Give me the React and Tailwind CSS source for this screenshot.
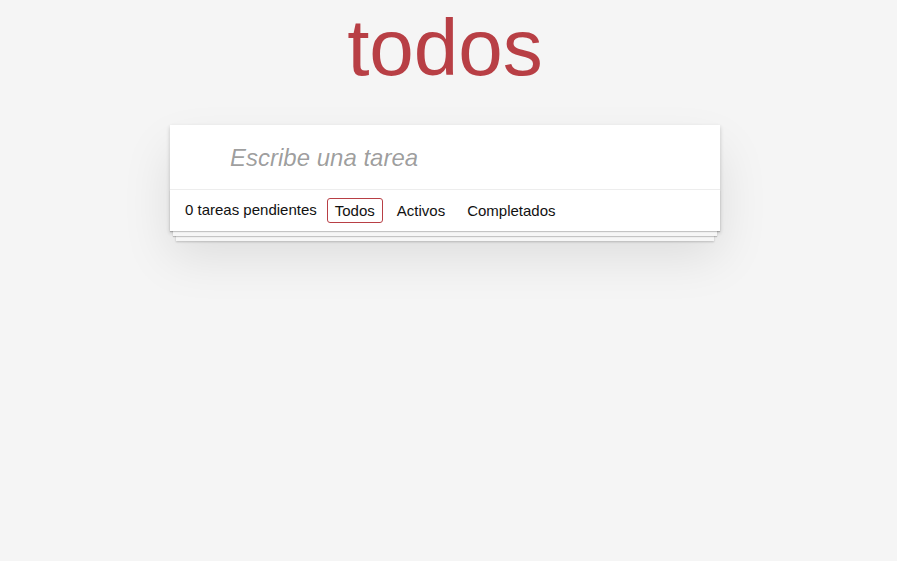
import { useState } from "react";

const FILTERS = ["Todos", "Activos", "Completados"];

export default function App() {
  const [filter, setFilter] = useState("Todos");
  const [text, setText] = useState("");

  return (
    <div className="min-h-screen bg-[#f5f5f5] font-['Liberation_Sans',Arial,sans-serif] text-[#111111]">
      <div className="w-[890px]">
        <div className="mx-auto w-[550px] pt-[2px]">
          <h1 className="text-center text-[80px] leading-[92px] font-normal text-[#b83f45]">todos</h1>

          <section className="mt-[31px] bg-white shadow-[0_2px_4px_0_rgba(0,0,0,0.2),0_25px_50px_0_rgba(0,0,0,0.1)]">
            <input
              value={text}
              onChange={e => setText(e.target.value)}
              placeholder="Escribe una tarea"
              className="block w-full h-[65px] pt-[2px] pl-[60px] pr-4 text-[24px] bg-transparent outline-none border-b border-[#ededed] placeholder:italic placeholder:text-black/40"
            />
            {/* stacked paper look under the footer */}
            <footer className="relative flex items-center h-[41px] px-[15px] text-[15px] shadow-[0_1px_1px_rgba(0,0,0,0.2),0_8px_0_-3px_#f6f6f6,0_9px_1px_-3px_rgba(0,0,0,0.2),0_16px_0_-6px_#f6f6f6,0_17px_2px_-6px_rgba(0,0,0,0.2)]">
              <span>0 tareas pendientes</span>
              <ul className="flex ml-[7px]">
                {FILTERS.map(f => (
                  <li key={f}>
                    <button
                      onClick={() => setFilter(f)}
                      className={`mx-[3px] px-[7px] py-[3px] leading-[17px] rounded-[3px] border ${filter === f ? "border-[#b83f45]" : "border-transparent"}`}
                    >
                      {f}
                    </button>
                  </li>
                ))}
              </ul>
            </footer>
          </section>
        </div>
      </div>
    </div>
  );
}
